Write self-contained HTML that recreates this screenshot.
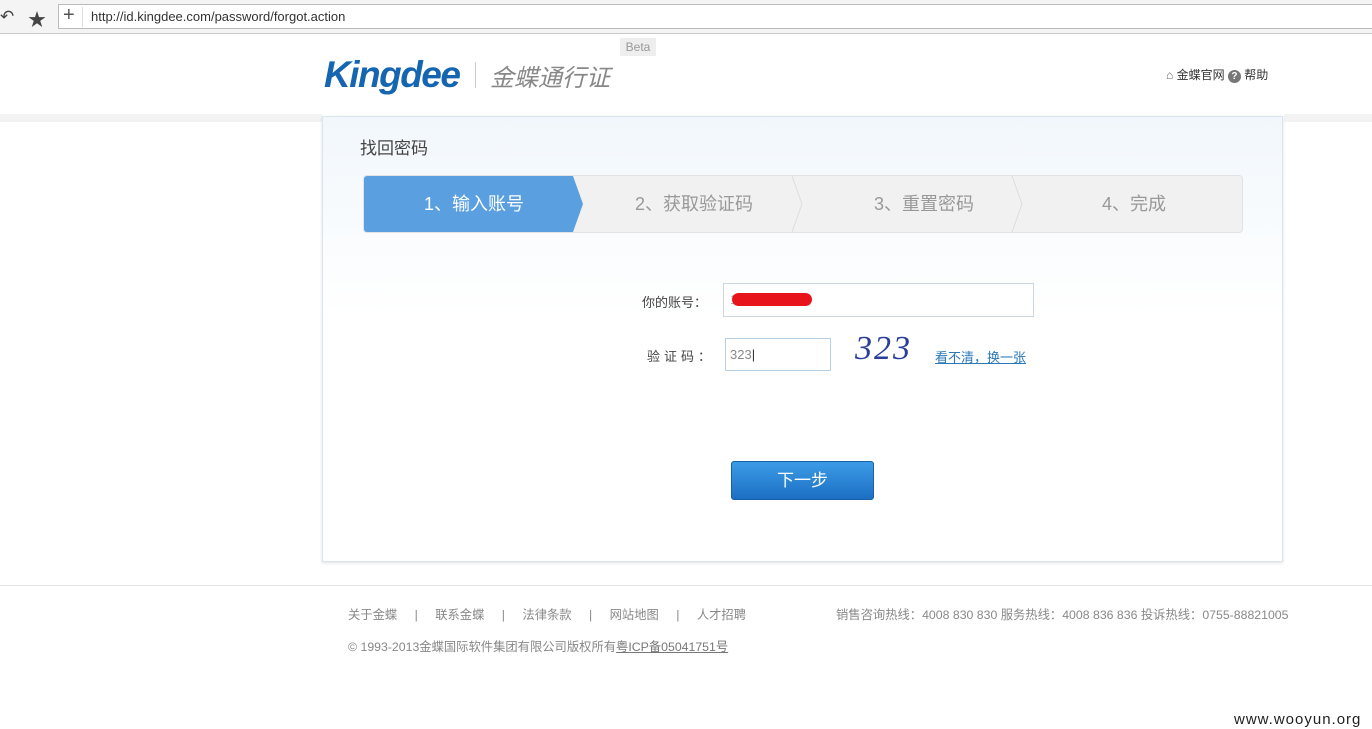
<!DOCTYPE html>
<html><head><meta charset="utf-8"><style>
*{margin:0;padding:0;box-sizing:border-box}
body{width:1372px;height:729px;background:#fff;font-family:"Liberation Sans","Noto Sans CJK SC",sans-serif;position:relative;overflow:hidden;color:#333}
.abs{position:absolute}
.bar{left:0;top:0;width:1372px;height:34px;background:#f4f4f4;border-bottom:1px solid #c8c8c8}
.url{left:58px;top:4px;width:1314px;height:25px;background:#fff;border:1px solid #bbb;border-right:none}
.dots{top:114px;height:8px;background-image:radial-gradient(#d0d0d0 0.6px,transparent 0.7px);background-size:2px 2px}
.panel{left:322px;top:116px;width:961px;height:446px;border:1px solid #d8e4ee;background:linear-gradient(#f1f7fc,#fff 45%);box-shadow:0 1px 3px rgba(0,0,0,.12)}
.steps{left:363px;top:175px;width:880px;height:58px;background:#f1f1f1;border:1px solid #e2e2e2;border-radius:4px;overflow:hidden}
.st{position:absolute;top:0;height:56px;line-height:56px;font-size:18px;color:#999;text-align:center}
.inp{background:#fff;border:1px solid #ccd6de}
.foot{font-size:12.3px;color:#888}
.sep{display:inline-block;width:38px;text-align:center}
</style></head><body>
<div class="abs bar"></div>
<div class="abs" style="left:0;top:7px;font-size:17px;color:#444">↶</div>
<div class="abs" style="left:28px;top:6px;font-size:18px;color:#444">★</div>
<div class="abs url"></div>
<div class="abs" style="left:63px;top:4px;font-size:20px;color:#555">+</div>
<div class="abs" style="left:82px;top:7px;width:1px;height:20px;background:#ddd"></div>
<div class="abs" style="left:91px;top:9px;font-size:13px;color:#333">http://id.kingdee.com/password/forgot.action</div>

<div class="abs" style="left:324px;top:54px;font-size:37px;font-weight:bold;font-style:italic;color:#1565b0;letter-spacing:-1.5px">Kingdee</div>
<div class="abs" style="left:475px;top:62px;width:1px;height:26px;background:#ccc"></div>
<div class="abs" style="left:490px;top:58px;font-size:24px;color:#888;font-style:italic">金蝶通行证</div>
<div class="abs" style="left:620px;top:38px;width:36px;height:18px;background:#eee;font-size:12px;color:#999;text-align:center;line-height:18px">Beta</div>
<div class="abs" style="left:1166px;top:66px;font-size:12px;color:#333"><span style="color:#666">⌂</span> 金蝶官网 <span style="display:inline-block;width:13px;height:13px;border-radius:50%;background:#777;color:#fff;font-size:10px;text-align:center;line-height:13px;font-weight:bold">?</span> 帮助</div>

<div class="abs dots" style="left:0;width:322px"></div>
<div class="abs dots" style="left:1284px;width:88px"></div>

<div class="abs panel"></div>
<div class="abs" style="left:360px;top:134px;font-size:17px;color:#444">找回密码</div>
<div class="abs steps">
<svg class="abs" style="left:0;top:0" width="880" height="56">
<polygon points="0,0 209,0 219,28 209,56 0,56" fill="#5a9fdf"/>
<polyline points="428,0 438,28 428,56" fill="none" stroke="#ddd"/>
<polyline points="648,0 658,28 648,56" fill="none" stroke="#ddd"/>
</svg>
<div class="st" style="left:0;width:220px;color:#fff">1、输入账号</div>
<div class="st" style="left:220px;width:220px">2、获取验证码</div>
<div class="st" style="left:440px;width:240px">3、重置密码</div>
<div class="st" style="left:660px;width:220px">4、完成</div>
</div>

<div class="abs" style="left:642px;top:292px;font-size:13px;color:#444">你的账号：</div>
<div class="abs inp" style="left:723px;top:283px;width:311px;height:34px"></div>
<div class="abs" style="left:730px;top:292px;font-size:13px;color:#aaa">1860</div>
<div class="abs" style="left:732px;top:293px;width:80px;height:13px;background:#e8141c;border-radius:7px"></div>
<div class="abs" style="left:647px;top:346px;font-size:13px;color:#444;letter-spacing:4px">验证码：</div>
<div class="abs inp" style="left:725px;top:338px;width:106px;height:33px;border-color:#b8d0e4"></div>
<div class="abs" style="left:730px;top:347px;font-size:13px;color:#888">323<span style="color:#333">|</span></div>
<div class="abs" style="left:855px;top:330px;font-size:34px;color:#2a3d9a;font-family:'Liberation Serif',serif;font-style:italic;letter-spacing:2px">323</div>
<div class="abs" style="left:935px;top:347px;font-size:13px;color:#2a78b8;text-decoration:underline">看不清，换一张</div>

<div class="abs" style="left:731px;top:461px;width:143px;height:39px;border-radius:3px;background:linear-gradient(#3c9be6,#1c6fc4);border:1px solid #1a60a8;color:#fff;font-size:17px;text-align:center;line-height:37px">下一步</div>

<div class="abs" style="left:0;top:585px;width:1372px;height:1px;background:#e4e4e4"></div>
<div class="abs foot" style="left:348px;top:605px">关于金蝶<span class="sep">|</span>联系金蝶<span class="sep">|</span>法律条款<span class="sep">|</span>网站地图<span class="sep">|</span>人才招聘</div>
<div class="abs foot" style="left:836px;top:605px">销售咨询热线：4008 830 830 服务热线：4008 836 836 投诉热线：0755-88821005</div>
<div class="abs foot" style="left:348px;top:637px">© 1993-2013金蝶国际软件集团有限公司版权所有<span style="text-decoration:underline;color:#777">粤ICP备05041751号</span></div>
<div class="abs" style="left:1234px;top:711px;font-size:15px;color:#222;letter-spacing:1px">www.wooyun.org</div>
</body></html>
